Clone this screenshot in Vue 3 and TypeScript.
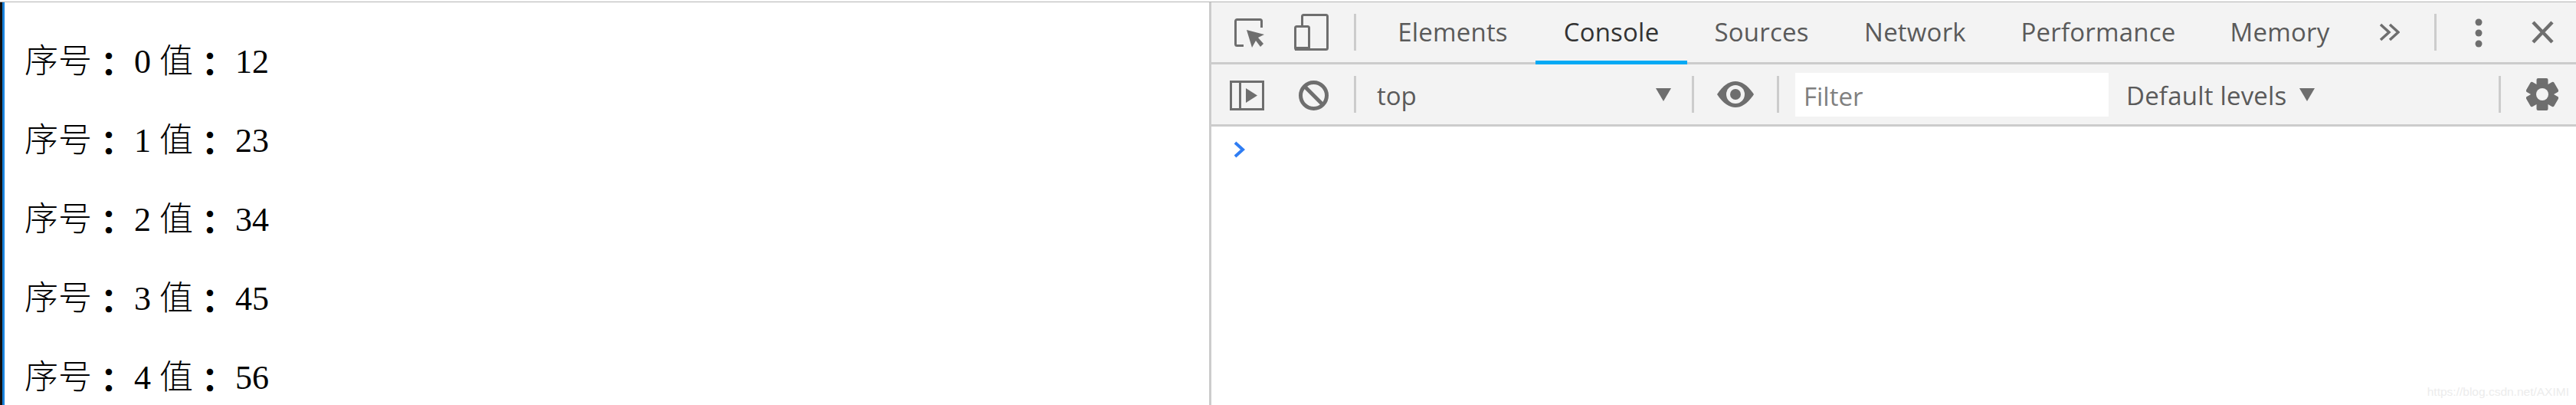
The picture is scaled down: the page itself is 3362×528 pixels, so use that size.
<script setup lang="ts">
const rows = [
  { index: 0, value: 12 },
  { index: 1, value: 23 },
  { index: 2, value: 34 },
  { index: 3, value: 45 },
  { index: 4, value: 56 },
];

const tabs = [
  { name: 'Elements', width: 216 },
  { name: 'Console', width: 198 },
  { name: 'Sources', width: 194 },
  { name: 'Network', width: 207 },
  { name: 'Performance', width: 271 },
  { name: 'Memory', width: 203 },
];

const gearTeeth = [0, 60, 120];
</script>

<template>
  <div class="page">
    <div class="top-line"></div>
    <div class="body">
      <div class="strip"></div>
      <main class="content">
        <p v-for="row in rows" :key="row.index" class="row">序号<span class="colon">：</span> {{ row.index }} 值<span class="colon">：</span> {{ row.value }}</p>
      </main>
      <section class="devtools">
        <div class="toolbar">
          <svg class="ic-inspect" width="39" height="38" viewBox="0 0 39 38">
            <path d="M12 35.500H3.500a2 2 0 0 1-2-2V3.500a2 2 0 0 1 2-2h30a2 2 0 0 1 2 2V12" fill="none" stroke="#6e6e6e" stroke-width="3" />
            <path d="M16 15l23 6-8 4 7 8-4 4-6-8-5 9z" fill="#6e6e6e" />
          </svg>
          <svg class="ic-device" width="45" height="48" viewBox="0 0 45 48">
            <path d="M10.500 15V3.500a2 2 0 0 1 2-2h29a2 2 0 0 1 2 2v41a2 2 0 0 1-2 2H20" fill="none" stroke="#6e6e6e" stroke-width="3" />
            <rect x="1.500" y="16.500" width="18" height="30" rx="2" fill="none" stroke="#6e6e6e" stroke-width="3" />
            <rect x="1" y="43" width="19" height="5" fill="#6e6e6e" />
          </svg>
          <span class="sep first-sep"></span>
          <div class="tabs">
            <div
              v-for="tab in tabs"
              :key="tab.name"
              class="tab"
              :class="{ active: tab.name === 'Console' }"
              :style="{ width: tab.width + 'px' }"
            >{{ tab.name }}</div>
          </div>
          <svg class="ic-more" width="27" height="24" viewBox="0 0 27 24">
            <path d="M2 2l11 10L2 22M14 2l11 10-11 10" fill="none" stroke="#6e6e6e" stroke-width="3.500" />
          </svg>
          <span class="sep more-sep"></span>
          <svg class="ic-dots" width="10" height="38" viewBox="0 0 10 38">
            <circle cx="5" cy="5" r="4.500" fill="#6e6e6e" />
            <circle cx="5" cy="19" r="4.500" fill="#6e6e6e" />
            <circle cx="5" cy="33" r="4.500" fill="#6e6e6e" />
          </svg>
          <svg class="ic-close" width="29" height="30" viewBox="0 0 29 30">
            <path d="M2 2l25 26M27 2L2 28" fill="none" stroke="#6e6e6e" stroke-width="4.500" />
          </svg>
        </div>
        <div class="toolbar filter-bar">
          <svg class="ic-dock" width="45" height="39" viewBox="0 0 45 39">
            <rect x="1.500" y="1.500" width="42" height="36" fill="none" stroke="#6e6e6e" stroke-width="3" />
            <path d="M13.500 2v35" stroke="#6e6e6e" stroke-width="3" />
            <path d="M21 10l15 9.500-15 9.500z" fill="#6e6e6e" />
          </svg>
          <svg class="ic-block" width="39" height="39" viewBox="0 0 39 39">
            <circle cx="19.500" cy="19.500" r="17" fill="none" stroke="#6e6e6e" stroke-width="5" />
            <path d="M7 7l25 25" stroke="#6e6e6e" stroke-width="5" />
          </svg>
          <span class="sep block-sep"></span>
          <div class="context">
            <span class="label">top</span>
            <i class="caret"></i>
          </div>
          <span class="sep"></span>
          <svg class="ic-eye" width="48" height="34" viewBox="0 0 48 34">
            <path d="M0 17C8 5 16 0 24 0s16 5 24 17c-8 12-16 17-24 17S8 29 0 17z" fill="#6e6e6e" />
            <circle cx="24" cy="17" r="12" fill="#f3f3f3" />
            <circle cx="24" cy="17" r="7" fill="#6e6e6e" />
          </svg>
          <span class="sep eye-sep"></span>
          <div class="filter">Filter</div>
          <div class="levels">
            <span class="label">Default levels</span>
            <i class="caret"></i>
          </div>
          <span class="sep gear-sep"></span>
          <svg class="ic-gear" width="42" height="42" viewBox="0 0 42 42">
            <rect
              v-for="angle in gearTeeth"
              :key="angle"
              x="13.500"
              y="0"
              width="15"
              height="42"
              rx="2"
              fill="#6e6e6e"
              :transform="`rotate(${angle} 21 21)`"
            />
            <circle cx="21" cy="21" r="15" fill="#6e6e6e" />
            <circle cx="21" cy="21" r="8" fill="#f3f3f3" />
          </svg>
        </div>
        <div class="console">
          <svg width="15" height="22" viewBox="0 0 15 22">
            <path d="M2 2l10 9-10 9" fill="none" stroke="#2f7df3" stroke-width="4" />
          </svg>
          <span class="watermark">https://blog.csdn.net/AXIMI</span>
        </div>
      </section>
    </div>
  </div>
</template>

<style scoped>
.page {
  width: 3362px;
  height: 528px;
  display: flex;
  flex-direction: column;
  overflow: hidden;
  background: #fff;
}
.top-line {
  height: 3px;
  flex: none;
  background: #fff;
  border-bottom: 1px solid #b4b4b4;
  box-sizing: border-box;
}
.body {
  flex: 1;
  display: flex;
  min-height: 0;
}
.strip {
  width: 6px;
  flex: none;
  background: linear-gradient(90deg, #111 0 3px, #1a83dc 3px);
}
.content {
  width: 1572px;
  flex: none;
  padding: 48px 0 0 26px;
  box-sizing: border-box;
  font-family: "Liberation Serif", "Noto Sans CJK TC", serif;
  font-size: 44px;
  font-weight: 300;
  color: #000;
}
.row {
  margin: 0 0 44px;
  line-height: 59px;
  white-space: pre;
}
.colon {
  display: inline-block;
  font-weight: 700;
  transform: translateY(5px);
}
.devtools {
  flex: 1;
  min-width: 0;
  display: flex;
  flex-direction: column;
  border-left: 3px solid #ccc;
  font-family: "Open Sans", sans-serif;
  font-size: 33px;
  color: #5a5a5a;
}
.toolbar {
  height: 81px;
  flex: none;
  display: flex;
  align-items: center;
  background: #f3f3f3;
  border-bottom: 3px solid #ccc;
  box-sizing: border-box;
}
.sep {
  width: 3px;
  height: 48px;
  flex: none;
  background: #ccc;
}
.ic-inspect {
  margin: 2px 0 0 30px;
}
.ic-device {
  margin-left: 39px;
}
.first-sep {
  margin-left: 33px;
}
.tabs {
  display: flex;
  align-self: stretch;
  margin-left: 18px;
}
.tab {
  display: flex;
  align-items: center;
  justify-content: center;
  flex: none;
  margin-bottom: -3px;
  letter-spacing: 0.2px;
  border-bottom: 5px solid transparent;
  box-sizing: border-box;
}
.tab.active {
  color: #333;
  border-bottom-color: #03a9f4;
}
.ic-more {
  margin-left: 28px;
}
.more-sep {
  margin-left: 45px;
}
.ic-dots {
  margin: 2px 0 0 50px;
}
.ic-close {
  margin-left: 64px;
}
.ic-dock {
  margin: 3px 0 0 24px;
}
.ic-block {
  margin: 3px 0 0 45px;
}
.block-sep {
  margin-left: 33px;
}
.context {
  width: 438px;
  display: flex;
  align-items: center;
  justify-content: space-between;
  padding: 0 27px;
  box-sizing: border-box;
}
.label {
  padding-top: 3px;
}
.caret {
  width: 0;
  height: 0;
  border-left: 10.500px solid transparent;
  border-right: 10.500px solid transparent;
  border-top: 17px solid #6e6e6e;
}
.ic-eye {
  margin-left: 30px;
}
.eye-sep {
  margin-left: 30px;
}
.filter {
  width: 409px;
  height: 57px;
  margin: 1px 0 0 21px;
  padding-left: 11px;
  box-sizing: border-box;
  line-height: 62px;
  background: #fff;
  color: #808080;
}
.levels {
  display: flex;
  align-items: center;
  gap: 16px;
  margin-left: 23px;
  letter-spacing: 0.2px;
}
.gear-sep {
  margin-left: auto;
}
.ic-gear {
  margin: 0 23px 0 33px;
}
.console {
  flex: 1;
  position: relative;
  background: #fff;
  padding: 19px 0 0 29px;
}
.console svg {
  display: block;
}
.watermark {
  position: absolute;
  right: 9px;
  bottom: 8px;
  font-family: "Liberation Sans", sans-serif;
  font-size: 15.500px;
  color: #ececec;
}
</style>
